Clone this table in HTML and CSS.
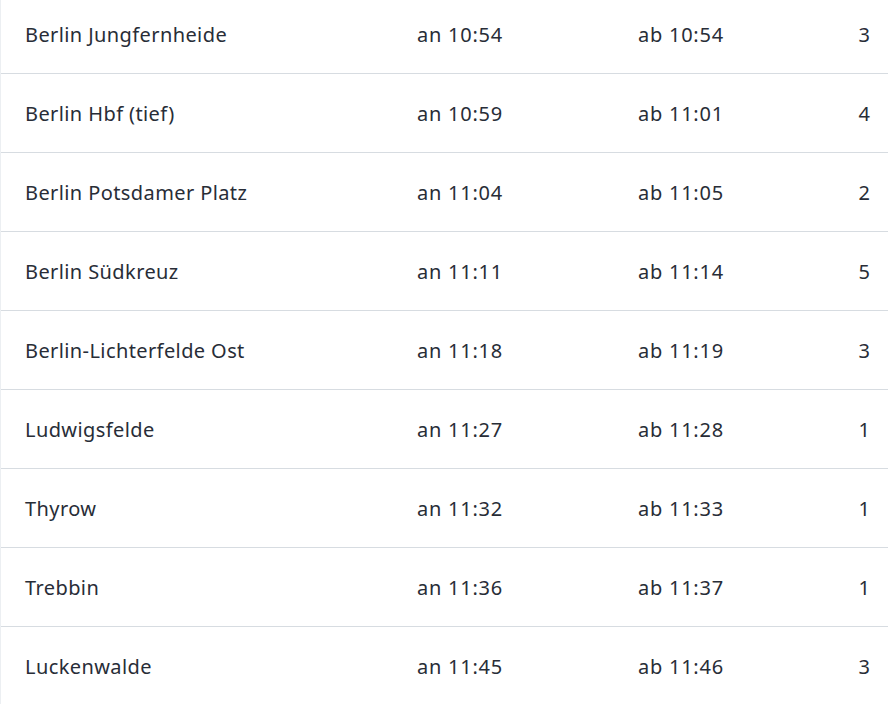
FILE: index.html
```html
<!DOCTYPE html>
<html lang="de">
<head>
  <meta charset="UTF-8">
  <title>Fahrtverlauf</title>
  <link rel="stylesheet" href="styles.css">
</head>
<body>
  <!-- Halte des Zuges -->
  <ul class="stops">
    <li class="stop"><span class="name">Berlin Jungfernheide</span><span class="time">an 10:54</span><span class="time">ab 10:54</span><span class="track">3</span></li>
    <li class="stop"><span class="name">Berlin Hbf (tief)</span><span class="time">an 10:59</span><span class="time">ab 11:01</span><span class="track">4</span></li>
    <li class="stop"><span class="name">Berlin Potsdamer Platz</span><span class="time">an 11:04</span><span class="time">ab 11:05</span><span class="track">2</span></li>
    <li class="stop"><span class="name">Berlin Südkreuz</span><span class="time">an 11:11</span><span class="time">ab 11:14</span><span class="track">5</span></li>
    <li class="stop"><span class="name">Berlin-Lichterfelde Ost</span><span class="time">an 11:18</span><span class="time">ab 11:19</span><span class="track">3</span></li>
    <li class="stop"><span class="name">Ludwigsfelde</span><span class="time">an 11:27</span><span class="time">ab 11:28</span><span class="track">1</span></li>
    <li class="stop"><span class="name">Thyrow</span><span class="time">an 11:32</span><span class="time">ab 11:33</span><span class="track">1</span></li>
    <li class="stop"><span class="name">Trebbin</span><span class="time">an 11:36</span><span class="time">ab 11:37</span><span class="track">1</span></li>
    <li class="stop"><span class="name">Luckenwalde</span><span class="time">an 11:45</span><span class="time">ab 11:46</span><span class="track">3</span></li>
  </ul>
</body>
</html>
```

FILE: styles.css
```css
/* Reset */
* { box-sizing: border-box; margin: 0; padding: 0; }
body { font-family: "Noto Sans", sans-serif; background: #fff; color: #282d37; overflow: hidden; }

/* Halteliste */
.stops { list-style: none; border-left: 1px solid #eceff2; margin-top: -5px; }
.stop {
  display: grid; grid-template-columns: 392px 221px 1fr auto;
  align-items: center; height: 79px;
  padding: 2px 18px 0 24px;
  border-bottom: 1px solid #d7dce1;
  font-size: 20px; line-height: 1.5;
}
.name { letter-spacing: 0.4px; }
.time { letter-spacing: 0.75px; }
.track { text-align: right; }
```
